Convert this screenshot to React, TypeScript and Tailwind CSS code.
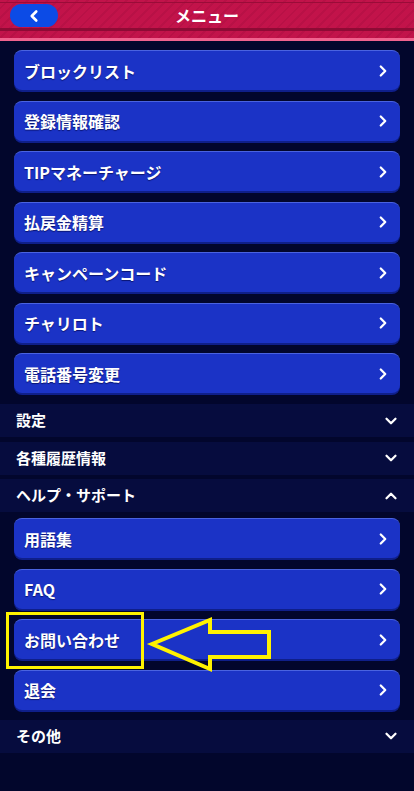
import { ChevronLeft, ChevronRight, ChevronDown, ChevronUp } from "lucide-react";

const topItems = ["ブロックリスト", "登録情報確認", "TIPマネーチャージ", "払戻金精算", "キャンペーンコード", "チャリロト", "電話番号変更"];
const helpItems = ["用語集", "FAQ", "お問い合わせ", "退会"];

const font = { fontFamily: '"Noto Sans CJK JP", "Noto Sans", sans-serif' };

const MenuButton = ({ label }: { label: string }) => (
  <div className="flex h-[40px] items-center justify-between rounded-[8px] border-t border-[#4a63e0] bg-[#1b33c6] pl-[10px] pr-[8px] shadow-[0_2px_0_#0f1f8a]">
    <span className="text-[16px] font-bold text-white [text-shadow:0_1px_1px_#0a1470]">{label}</span>
    <ChevronRight className="h-[18px] w-[18px] text-white" strokeWidth={3} />
  </div>
);

const SectionRow = ({ label, open = false }: { label: string; open?: boolean }) => (
  <div className="flex h-[33px] items-center justify-between bg-[#060c3e] pl-[16px] pr-[14px]">
    <span className="text-[15px] font-bold text-white">{label}</span>
    {open ? (
      <ChevronUp className="h-[18px] w-[18px] text-white" strokeWidth={3} />
    ) : (
      <ChevronDown className="h-[18px] w-[18px] text-white" strokeWidth={3} />
    )}
  </div>
);

export default function App() {
  return (
    <div className="relative h-[791px] w-[414px] overflow-hidden bg-[#02062c]" style={font}>
      {/* header */}
      <div className="relative h-[38px] bg-[repeating-linear-gradient(135deg,#c2134a_0px,#c2134a_5px,#b81146_5px,#b81146_7px)]">
        <div className="absolute left-0 right-0 top-[2px] h-[1px] bg-[#9a0c38]" />
        <div className="absolute left-0 right-0 top-[28px] h-[3px] bg-[#8e0b35]" />
        <div className="flex h-[30px] items-center justify-center">
          <span className="text-[16px] font-bold text-white">メニュー</span>
        </div>
        <div className="absolute left-[10px] top-[4px] flex h-[23px] w-[48px] items-center justify-center rounded-full bg-[#0c4be6]">
          <ChevronLeft className="h-[18px] w-[18px] text-white" strokeWidth={3.5} />
        </div>
      </div>
      <div className="h-[3px] bg-[#f0628e]" />

      <div className="flex flex-col gap-[10.5px] px-[14px] pt-[9px]">
        {topItems.map((t) => (
          <MenuButton key={t} label={t} />
        ))}
      </div>

      <div className="mt-[11px] flex flex-col gap-[4.5px]">
        <SectionRow label="設定" />
        <SectionRow label="各種履歴情報" />
        <SectionRow label="ヘルプ・サポート" open />
      </div>

      <div className="flex flex-col gap-[10.5px] px-[14px] pt-[6px]">
        {helpItems.map((t) => (
          <MenuButton key={t} label={t} />
        ))}
      </div>

      <div className="mt-[10px]">
        <SectionRow label="その他" />
      </div>

      {/* annotation */}
      <div className="absolute left-[6px] top-[612px] h-[57px] w-[138px] border-[3px] border-[#fff200]" />
      <svg className="absolute left-[145px] top-[614px]" width="130" height="60" viewBox="0 0 130 60">
        <path d="M7 30 L65 6 L65 18 L124 18 L124 43 L65 43 L65 55 Z" fill="none" stroke="#fff200" strokeWidth="4" strokeLinejoin="miter" />
      </svg>
    </div>
  );
}
